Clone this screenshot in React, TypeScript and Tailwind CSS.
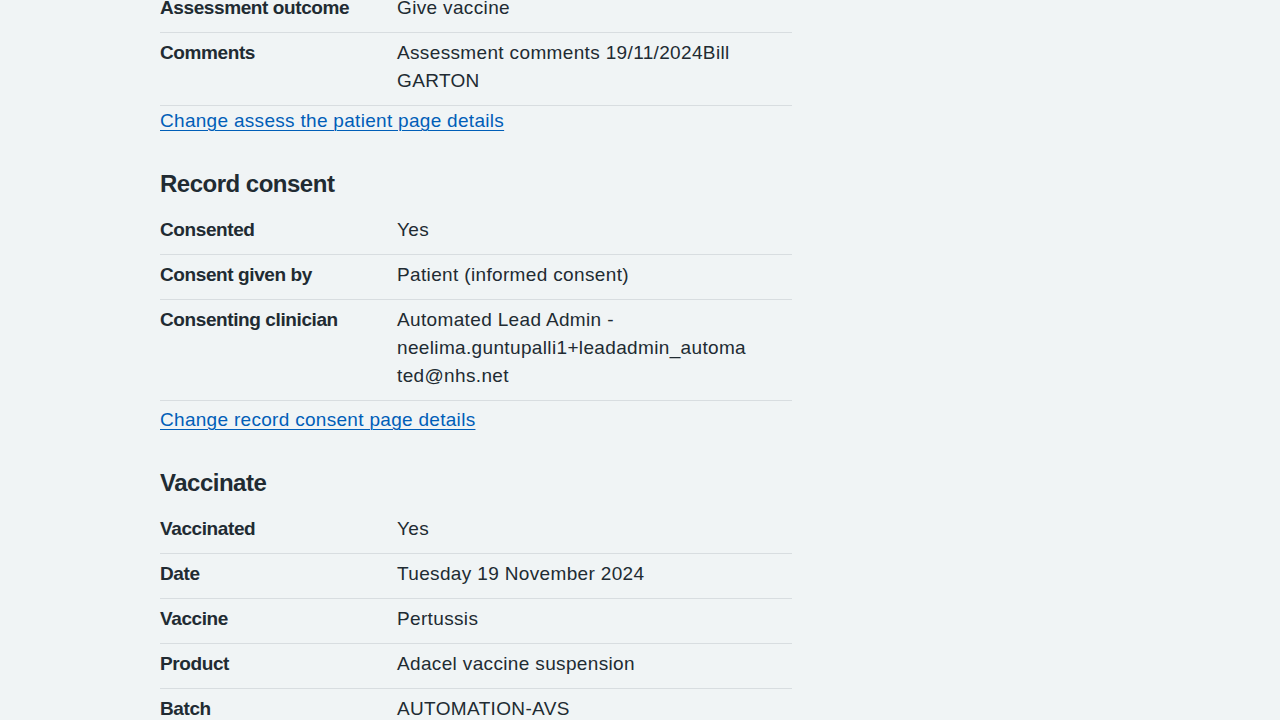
type Row = { label: string; value: React.ReactNode };

const assessRows: Row[] = [
  { label: "Assessment outcome", value: "Give vaccine" },
  {
    label: "Comments",
    value: (
      <>
        Assessment comments 19/11/2024Bill
        <br />
        GARTON
      </>
    ),
  },
];

const consentRows: Row[] = [
  { label: "Consented", value: "Yes" },
  { label: "Consent given by", value: "Patient (informed consent)" },
  {
    label: "Consenting clinician",
    value: (
      <>
        Automated Lead Admin -
        <br />
        neelima.guntupalli1+leadadmin_automa
        <br />
        ted@nhs.net
      </>
    ),
  },
];

const vaccinateRows: Row[] = [
  { label: "Vaccinated", value: "Yes" },
  { label: "Date", value: "Tuesday 19 November 2024" },
  { label: "Vaccine", value: "Pertussis" },
  { label: "Product", value: "Adacel vaccine suspension" },
  { label: "Batch", value: "AUTOMATION-AVS" },
];

function SummaryList({ rows }: { rows: Row[] }) {
  return (
    <dl>
      {rows.map((row) => (
        <div
          key={row.label}
          className="grid grid-cols-[237px_1fr] border-b border-[#d8dde0] pt-[6px] pb-[10px]"
        >
          <dt className="font-bold text-[19px] leading-[28px] tracking-[-0.4px]">{row.label}</dt>
          <dd className="text-[19px] leading-[28px] tracking-[0.35px]">{row.value}</dd>
        </div>
      ))}
    </dl>
  );
}

function ChangeLink({ children, className }: { children: string; className?: string }) {
  return (
    <a
      href="#"
      className={`block w-fit text-[19px] leading-[28px] tracking-[0.3px] text-[#005eb8] underline underline-offset-[3px] decoration-1 ${className ?? ""}`}
    >
      {children}
    </a>
  );
}

export default function App() {
  return (
    <div className="min-h-screen flex flex-col bg-[#f0f4f5] text-[#212b32] font-['Liberation_Sans','Noto_Sans',sans-serif] overflow-hidden">
      <main className="w-[960px] mx-auto -mt-[12px]">
        <div className="w-[632px]">
          <SummaryList rows={assessRows} />
          <ChangeLink className="mt-[1px]">Change assess the patient page details</ChangeLink>

          <h2 className="mt-[33px] mb-[10px] text-[24px] leading-[32px] font-bold tracking-[-0.5px]">
            Record consent
          </h2>
          <SummaryList rows={consentRows} />
          <ChangeLink className="mt-[5px]">Change record consent page details</ChangeLink>

          <h2 className="mt-[33px] mb-[10px] text-[24px] leading-[32px] font-bold tracking-[-0.5px]">
            Vaccinate
          </h2>
          <SummaryList rows={vaccinateRows} />
        </div>
      </main>
    </div>
  );
}
